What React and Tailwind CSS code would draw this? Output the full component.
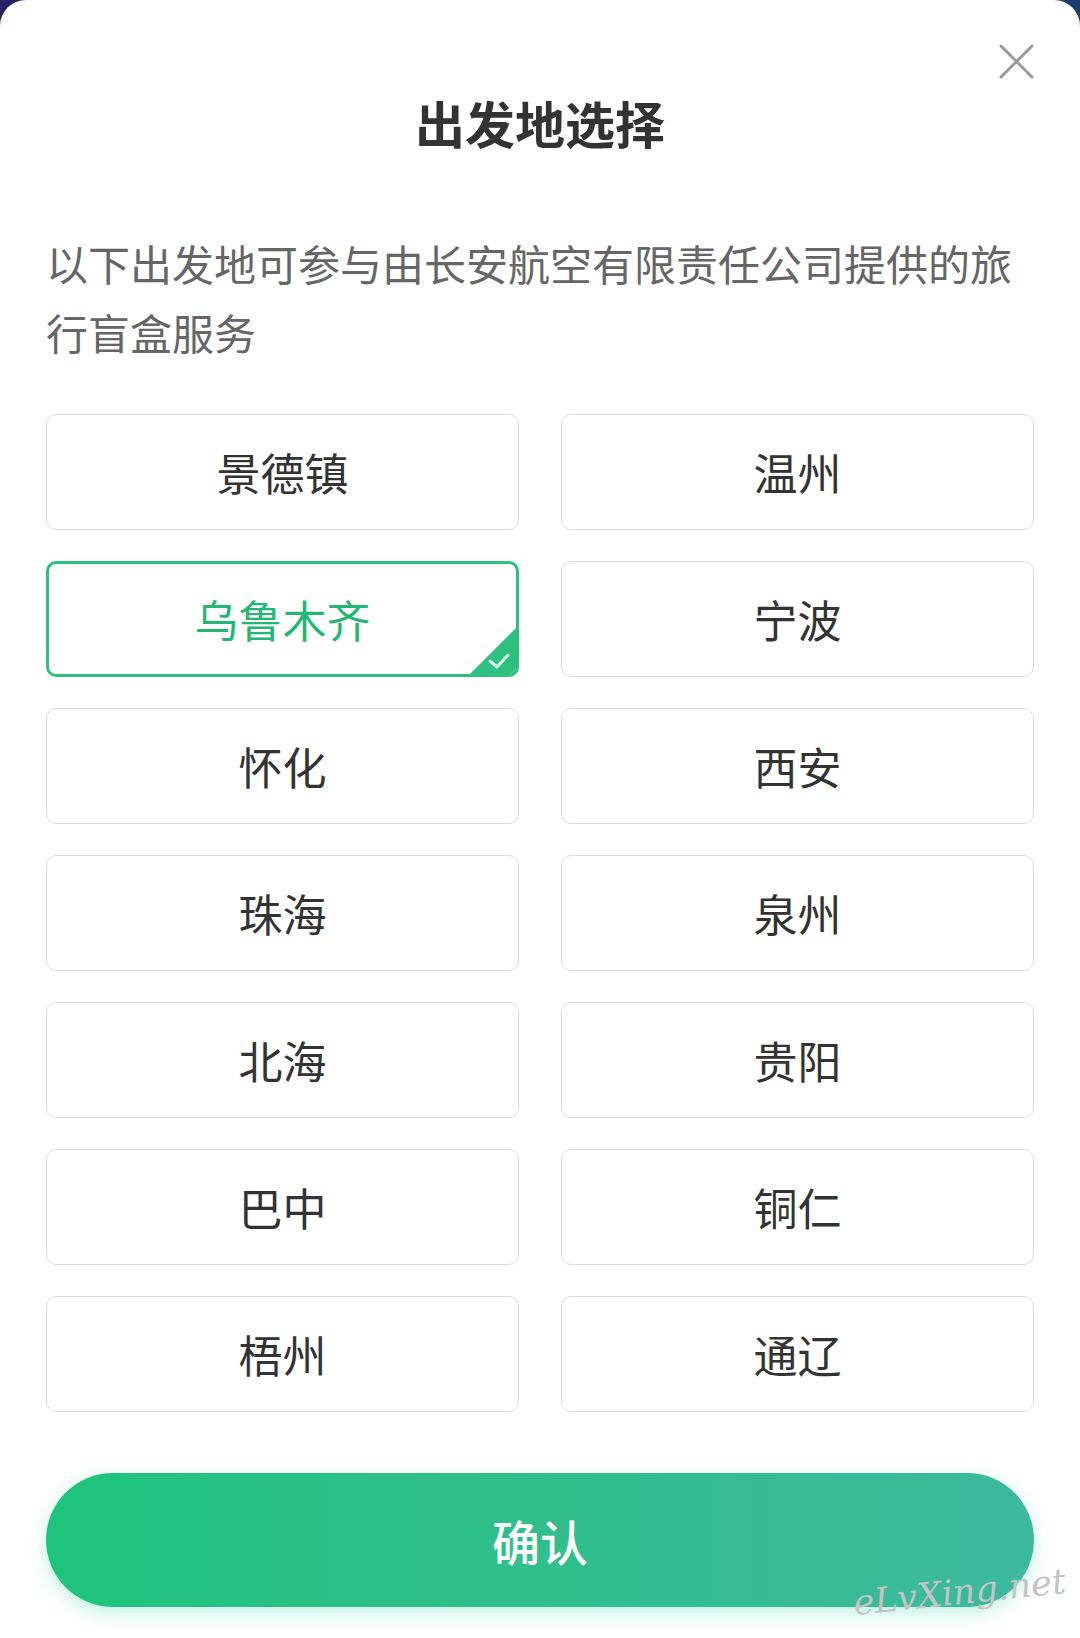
const cities = [
  "景德镇", "温州",
  "乌鲁木齐", "宁波",
  "怀化", "西安",
  "珠海", "泉州",
  "北海", "贵阳",
  "巴中", "铜仁",
  "梧州", "通辽",
];

const font = { fontFamily: '"Noto Sans CJK SC", "Noto Sans", sans-serif' };

function CityCell({ name, selected }) {
  if (selected) {
    return (
      <button className="relative flex h-[116px] items-center justify-center overflow-hidden rounded-[10px] border-[3px] border-[#2ec07f] bg-white text-[44px] text-[#22b873]">
        {name}
        <svg className="absolute bottom-0 right-0" width="46" height="46" viewBox="0 0 46 46">
          <polygon points="46,0 46,46 0,46" fill="#2ec07f" />
          <polyline points="20,33 27,39 38,27" fill="none" stroke="#d6f5e6" strokeWidth="3" strokeLinecap="round" strokeLinejoin="round" />
        </svg>
      </button>
    );
  }
  return (
    <button className="flex h-[116px] items-center justify-center rounded-[10px] border-[1.5px] border-[#dcdcdc] bg-white text-[44px] text-[#333]">
      {name}
    </button>
  );
}

export default function App() {
  return (
    <div className="h-[1638px] w-[1080px] bg-gradient-to-r from-[#26206b] to-[#1b3f6d]" style={font}>
      <div className="relative h-full rounded-t-[26px] bg-white px-[46px]">
        <button className="absolute right-[46px] top-[44px] h-[35px] w-[35px]">
          <svg width="35" height="35" viewBox="0 0 35 35">
            <path d="M2 2 L33 33 M33 2 L2 33" stroke="#9a9a9a" strokeWidth="3" strokeLinecap="round" />
          </svg>
        </button>

        <h1 className="pt-[92px] text-center text-[50px] font-bold leading-[60px] text-[#333]">出发地选择</h1>

        <p className="mt-[76px] text-[42px] leading-[69px] text-[#666]">
          以下出发地可参与由长安航空有限责任公司提供的旅行盲盒服务
        </p>

        <div className="mt-[48px] grid grid-cols-2 gap-x-[42px] gap-y-[31px]">
          {cities.map((city) => (
            <CityCell key={city} name={city} selected={city === "乌鲁木齐"} />
          ))}
        </div>

        <button className="mt-[61px] flex h-[134px] w-full items-center justify-center rounded-full bg-gradient-to-r from-[#1dc47a] to-[#3db99d] text-[48px] font-medium text-white shadow-[0_6px_18px_rgba(40,210,160,0.3)]">
          确认
        </button>

        <div
          className="absolute bottom-[20px] right-[14px] -rotate-6 text-[35px] italic text-[#c4c4c4]"
          style={{ fontFamily: '"DejaVu Serif", serif' }}
        >
          eLvXing.net
        </div>
      </div>
    </div>
  );
}
